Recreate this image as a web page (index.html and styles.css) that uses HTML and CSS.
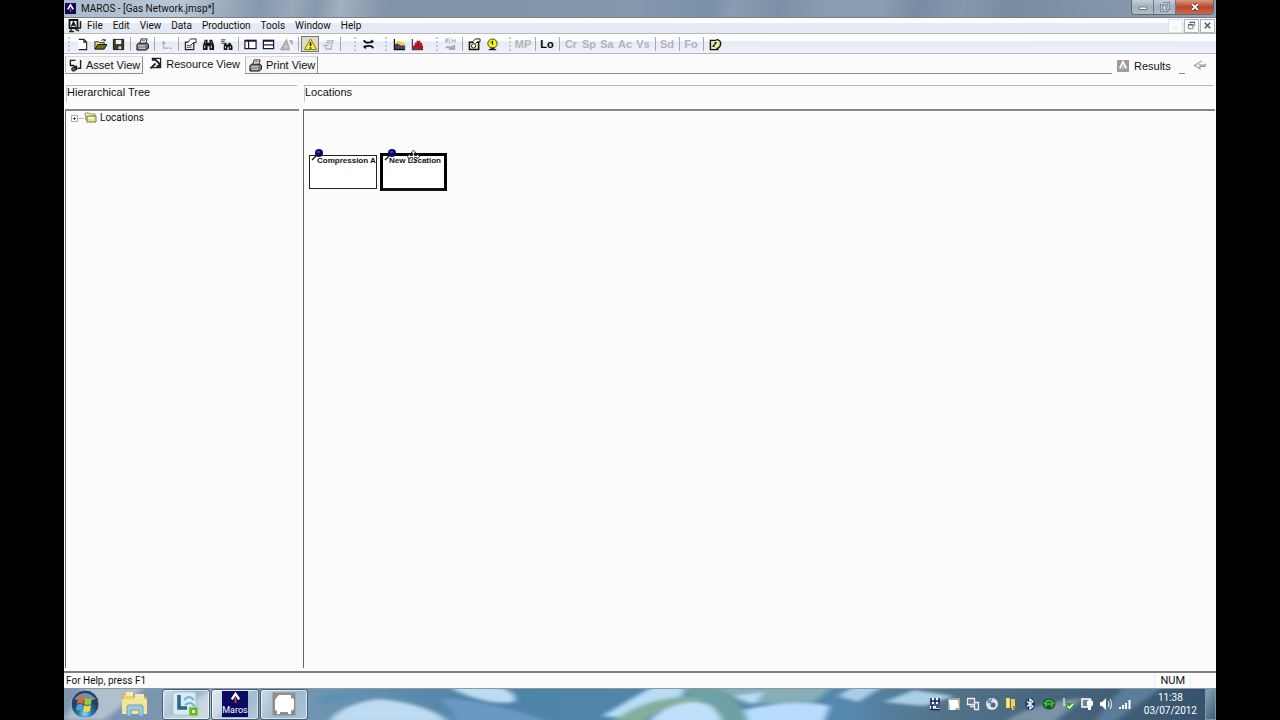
FILE: index.html
```html
<!DOCTYPE html>
<html lang="en">
<head>
<meta charset="utf-8">
<title>MAROS - [Gas Network.jmsp*]</title>
<link rel="stylesheet" href="styles.css">
</head>
<body>
<div class="desktop">
  <header class="titlebar">
    <svg class="app-icon" viewBox="0 0 12 12"><rect width="12" height="12" fill="#0b0b5c"/><path d="M3 7 6 2l3 5" fill="none" stroke="#fff" stroke-width="1.8"/><path d="M6 6v4" stroke="#c33" stroke-width="1.6"/></svg>
    <h1 class="title">MAROS - [Gas Network.jmsp*]</h1>
    <div class="window-controls">
      <button class="wc" aria-label="Minimize"><svg viewBox="0 0 12 12"><rect x="1.500" y="6" width="9" height="3" fill="#fff" stroke="#667" /></svg></button>
      <button class="wc" aria-label="Restore"><svg viewBox="0 0 12 12"><path d="M4 1.500h6.500v6.500H9M1.500 3.500h7v7h-7z" fill="none" stroke="#4e5a68" stroke-width="2.400"/><path d="M4 1.500h6.500v6.500H9M1.500 3.500h7v7h-7zM4.500 6.500h1v1h-1z" fill="none" stroke="#fff"/></svg></button>
      <button class="wc wc-close" aria-label="Close"><svg viewBox="0 0 12 12"><path d="m2.500 2.500 7 7m0-7-7 7" stroke="#5a3030" stroke-width="4"/><path d="m2.500 2.500 7 7m0-7-7 7" stroke="#fff" stroke-width="2.200"/></svg></button>
    </div>
  </header>

  <nav class="menubar" aria-label="Menu">
    <svg class="doc-icon" viewBox="0 0 14 14"><path d="M1.500 1h8v8h-8z" fill="#fff" stroke="#111" stroke-width="1.800"/><path d="m3.500 7.500 2-4.500 2 4.500M4 6h3" fill="none" stroke="#111" stroke-width="1.500"/><path d="M1 12.500h5M3 9v4M12.500 2v7H9M10 8l-2 2.500 3 1.500" fill="none" stroke="#222" stroke-width="1.500"/></svg>
    <button class="menu">File</button><button class="menu">Edit</button><button class="menu">View</button><button class="menu">Data</button><button class="menu">Production</button><button class="menu">Tools</button><button class="menu">Window</button><button class="menu">Help</button>
    <div class="mdi">
      <button class="mdi-btn mdi-off" aria-label="Minimize document"><svg viewBox="0 0 10 10"><path d="M3 8h4" stroke="#cdd3de"/></svg></button>
      <button class="mdi-btn" aria-label="Restore document"><svg viewBox="0 0 10 10"><path d="M3.500 3V1.500h5v4H7M1.500 4.500h5v4h-5z" fill="none" stroke="#777"/><path d="M1 4h6M3 1.500h6" stroke="#666" stroke-width="1.500"/></svg></button>
      <button class="mdi-btn" aria-label="Close document"><svg viewBox="0 0 10 10"><path d="m2 2 6 6m0-6L2 8" stroke="#555" stroke-width="1.600"/></svg></button>
    </div>
  </nav>

  <div class="toolbar" role="toolbar">
    <div class="group">
      <i class="grip"></i>
      <button class="tool" aria-label="New"><svg viewBox="0 0 14 14"><path d="M2.500 1.500h6l3 3v8h-9" fill="#fff" stroke="none"/><path d="M3 1.500h5.500l3 3v8H3M8.500 1.500v3h3" fill="none" stroke="#222" stroke-width="1.200"/></svg></button>
      <button class="tool" aria-label="Open"><svg viewBox="0 0 14 14"><path d="M1 12V4h4l1 1h5v2" fill="#e8e06a" stroke="#222"/><path d="M1 12l3-5h10l-3 5z" fill="#6b6b18" stroke="#111"/><path d="M8 3c1-2 3-2 4 0V1m0 2h-2" fill="none" stroke="#222"/></svg></button>
      <button class="tool" aria-label="Save"><svg viewBox="0 0 14 14"><path d="M1.500 1.500h11v11h-11z" fill="#3c3c20" stroke="#111"/><path d="M4 2h6v4.500H4z" fill="#eee"/><path d="M7 9h3v3H7z" fill="#ddd"/></svg></button>
      <i class="sep"></i>
      <button class="tool" aria-label="Print"><svg viewBox="0 0 14 14"><path d="M4 6l1.500-5H12l-1.500 5" fill="#fff" stroke="#222"/><path d="M6 3h4" stroke="#555"/><path d="M1 7l2-1.500h9L13.500 7v4L11 13H1z" fill="#777" stroke="#111"/><path d="M2 8.500h8M3 11h7" stroke="#eee"/></svg></button>
      <i class="sep"></i>
      <button class="tool" aria-label="Up one level" disabled><svg viewBox="0 0 14 14"><path d="M4 3 1.500 6h5z" fill="#aaa"/><path d="M4 4v7h5M10 11h3" fill="none" stroke="#aaa" stroke-width="1.300"/></svg></button>
      <i class="sep"></i>
      <button class="tool" aria-label="Properties"><svg viewBox="0 0 14 14"><path d="M1.500 4.500h9v8h-9z" fill="#eee" stroke="#222" stroke-width="1.300"/><path d="M3 8h5M3 10h5" stroke="#444"/><path d="M4 5l3-4h6v4h-3L7 8" fill="#fff" stroke="#222"/></svg></button>
      <button class="tool" aria-label="Find"><svg viewBox="0 0 14 14"><path d="M3 2h3v3h2V2h3l2 6v5H8V9H6v4H1V8z" fill="#161616"/><path d="M3 8v3M10 8v3M4 4v1M10 4v1" stroke="#fff"/></svg></button>
      <button class="tool" aria-label="Find next"><svg viewBox="0 0 14 14"><path d="M1 2h5M1 4h4M2 6h3" stroke="#333"/><path d="M5 5h2v2h2V5h2l2.500 4v4H9.500v-3H8v3H4V9z" fill="#161616"/><path d="M6 9v2M11 9v2" stroke="#fff"/></svg></button>
      <i class="sep"></i>
      <button class="tool" aria-label="Split vertically"><svg viewBox="0 0 14 14"><path d="M1 2.500h12v9H1zM5 3v8" fill="#fff" stroke="#18183c" stroke-width="1.300"/><path d="M1 3h12" stroke="#18183c" stroke-width="2"/></svg></button>
      <button class="tool" aria-label="Split horizontally"><svg viewBox="0 0 14 14"><path d="M1.500 2.500h11v9h-11zM2 7.500h10" fill="#fff" stroke="#18183c" stroke-width="1.300"/><path d="M1 3h12" stroke="#18183c" stroke-width="2"/></svg></button>
      <button class="tool" aria-label="Font" disabled><svg viewBox="0 0 14 14"><path d="M1 12.500 7 2l3 10.500zM10 3h3v4" fill="#bbb" stroke="#a5a5a5" stroke-width="1.300"/><path d="M5 9h3" stroke="#eee"/></svg></button>
      <i class="sep"></i>
      <button class="tool pressed" aria-label="Warnings" aria-pressed="true"><svg viewBox="0 0 14 14"><path d="M7 1 13.500 12.500H.5z" fill="#f7f02a" stroke="#77711c"/><path d="M7 4.500v4M7 10v1.500" stroke="#111" stroke-width="1.700"/></svg></button>
      <button class="tool" aria-label="Export" disabled><svg viewBox="0 0 14 14"><path d="M5 3h7l-2 4v5H4V8M1 8h6M4 5h5" fill="none" stroke="#aaa" stroke-width="1.200"/></svg></button>
      <i class="sep"></i>
    </div>
    <div class="group g-swap">
      <i class="grip"></i>
      <button class="tool" aria-label="Refresh"><svg viewBox="0 0 14 14"><path d="M2 2.500q1 3 5 2.500l5-1M2 9.500l5-1q4-.5 5 2.500" fill="none" stroke="#111" stroke-width="2" transform="matrix(1 0 0 1 0 0)"/><path d="m9.500 1.500 3.500 2-3 2.500zM4.500 7.500 1 9.500 4 12z" fill="#111"/></svg></button>
    </div>
    <div class="group g-chart">
      <i class="grip"></i>
      <button class="tool" aria-label="Area chart"><svg viewBox="0 0 14 14"><path d="M2 12V6l3-3 4 1 4 2v6z" fill="#dfd83c"/><path d="M2 12V7l3-1 3 2 5 0v4z" fill="#39397c"/><path d="M3 10h9" stroke="#a33"/><path d="M1.500 1v11.500H13" fill="none" stroke="#111" stroke-width="1.300"/></svg></button>
      <button class="tool" aria-label="Histogram"><svg viewBox="0 0 14 14"><path d="M2 12V8h2V5h2V3h4v2h2v3h1v4z" fill="#b01626"/><path d="M1.500 1v11.500H13" fill="none" stroke="#444" stroke-width="1.300"/></svg></button>
    </div>
    <div class="group g-run">
      <i class="grip"></i>
      <button class="tool" aria-label="Resume" disabled><svg viewBox="0 0 14 14"><path d="M2 5V1h2v2H2l2 2M9 5V1M9 3h3M12 1v4M5 1h2M5 3h2M5 5h2" fill="none" stroke="#aaa"/><path d="M2 9h6l4-2v6H6l-1-2H2z" fill="#aaa"/></svg></button>
      <i class="sep"></i>
      <button class="tool" aria-label="Run settings"><svg viewBox="0 0 14 14"><path d="M1.500 4.500h10v8h-10z" fill="#f1e98b" stroke="#111" stroke-width="1.600"/><circle cx="6" cy="8.500" r="2.300" fill="#fff" stroke="#222"/><path d="M5 4l3-3h5v3h-3L8 6" fill="#fff" stroke="#111"/></svg></button>
      <button class="tool" aria-label="Run"><svg viewBox="0 0 14 14"><circle cx="7" cy="6" r="5" fill="#f5ef1e" stroke="#3c3a10"/><path d="M7 3v4M5.500 4v1" stroke="#222" stroke-width="1.200"/><path d="M3 12.500h8M5 11h4" stroke="#222" stroke-width="1.500"/></svg></button>
    </div>
    <div class="group g-text">
      <i class="grip"></i>
      <button class="tool" disabled>MP</button><i class="sep"></i>
      <button class="tool tool-on">Lo</button><i class="sep"></i>
      <button class="tool" disabled>Cr</button><button class="tool" disabled>Sp</button><button class="tool" disabled>Sa</button><button class="tool" disabled>Ac</button><button class="tool" disabled>Vs</button><i class="sep"></i>
      <button class="tool" disabled>Sd</button><i class="sep"></i>
      <button class="tool" disabled>Fo</button><i class="sep"></i>
      <button class="tool" aria-label="Edit notes"><svg viewBox="0 0 14 14"><path d="M1.500 2.500h8v10h-8z" fill="#e4eaa0" stroke="#111" stroke-width="1.500"/><path d="M8 1.500q5 1 4.500 5-.5 4-4.500 5" fill="#e4eaa0" stroke="#111" stroke-width="1.500"/><path d="m4 9 4-4M4 9l2 0M8 5H6" fill="none" stroke="#111" stroke-width="1.300"/></svg></button>
    </div>
  </div>

  <div class="tabrow">
    <div class="tabs" role="tablist">
      <button class="tab" role="tab"><svg viewBox="0 0 14 14"><path d="M1.500 7V1.500H7M12.500 1v9H9" fill="none" stroke="#222" stroke-width="1.500"/><path d="M1 7h4l3 3M8 7v4H5" stroke="#111" stroke-width="1.500" fill="none"/><circle cx="5" cy="11" r="2.200" fill="#555" stroke="#222"/></svg>Asset View</button>
      <button class="tab active" role="tab" aria-selected="true"><svg viewBox="0 0 14 14"><path d="M3 1.500h9.500v10H1" fill="#fff" stroke="#222" stroke-width="1.300"/><path d="M3 3h4l4 4v3H8M2 12l5-5" fill="none" stroke="#223" stroke-width="2"/></svg>Resource View</button>
      <button class="tab" role="tab"><svg viewBox="0 0 14 14"><path d="M4 6l1.500-5H12l-1.500 5" fill="#fff" stroke="#222"/><path d="M6 3h4" stroke="#555"/><path d="M1 7l2-1.500h9L13.500 7v4L11 13H1z" fill="#777" stroke="#111"/><path d="M2 8.500h8M3 11h7" stroke="#eee"/></svg>Print View</button>
    </div>
    <div class="tab-line"></div>
    <div class="results">
      <button class="result-btn"><svg viewBox="0 0 13 13"><rect width="13" height="13" fill="#9c9c9c"/><path d="m3 9 3.500-7L10 9" fill="none" stroke="#fff" stroke-width="2"/><path d="M6.500 7v3" stroke="#ddd" stroke-width="1.500"/></svg>Results</button>
      <i class="dash"></i>
      <button class="back" aria-label="Back"><svg viewBox="0 0 14 14"><path d="M9 2 1 7l6 3.500V8h6M5 6.500h8V5" fill="none" stroke="#999" stroke-width="1.200"/></svg></button>
    </div>
  </div>

  <main class="workspace">
    <section class="side">
      <h2 class="pane-head">Hierarchical Tree</h2>
      <div class="pane tree">
        <button class="expand" aria-label="Expand"><svg viewBox="0 0 7 7"><path d="M.5.5h6v6h-6z" fill="#fff" stroke="#aaa"/><path d="M2 3.500h3M3.500 2v3" stroke="#555"/></svg></button>
        <i class="branch"></i>
        <svg class="folder" viewBox="0 0 13 11"><path d="M1 1h4l1 1h5v6H2z" fill="#f8f6c0" stroke="#98966a"/><path d="M3 4h9v6H3z" fill="#ebe78c" stroke="#77743c"/><path d="M4 6h6" stroke="#fff"/></svg>
        <span>Locations</span>
      </div>
    </section>
    <section class="view">
      <h2 class="pane-head">Locations</h2>
      <div class="pane canvas">
        <div class="node node-a"><svg class="pin" viewBox="0 0 12 12"><path d="m1 11 4-4" stroke="#111" stroke-width="1.200"/><circle cx="8" cy="4" r="4" fill="#08086e"/><path d="M6 3h3" stroke="#7777c8"/></svg><span class="node-label">Compression A</span></div>
        <div class="node node-b selected"><svg class="pin" viewBox="0 0 12 12"><path d="m1 11 4-4" stroke="#111" stroke-width="1.200"/><circle cx="8" cy="4" r="4" fill="#08086e"/><path d="M6 3h3" stroke="#7777c8"/></svg><span class="node-label">New Location</span></div>
        <svg class="cursor" viewBox="0 0 13 13"><path d="M6.500 0 9 3H7.300v2.500H10V4l3 2.500L10 9V7.500H7.300V10H9l-2.500 3L4 10h1.700V7.500H3V9L0 6.500 3 4v1.500h2.700V3H4z" fill="#fff" stroke="#222" stroke-width=".8"/></svg>
      </div>
    </section>
  </main>

  <footer class="status"><span>For Help, press F1</span><span class="num">NUM</span></footer>

  <div class="taskbar">
    <svg class="backdrop" viewBox="0 0 1152 32" preserveAspectRatio="none">
      <defs><filter id="soft" x="-5%" y="-30%" width="110%" height="160%"><feGaussianBlur stdDeviation="3 1.500"/></filter>
      <linearGradient id="sky"><stop offset="0" stop-color="#7f94ad"/><stop offset=".2" stop-color="#7397b4"/><stop offset=".36" stop-color="#4e83a8"/><stop offset=".68" stop-color="#5588ae"/><stop offset=".76" stop-color="#547389"/><stop offset="1" stop-color="#35526c"/></linearGradient></defs>
      <rect width="1152" height="32" fill="url(#sky)"/>
      <g filter="url(#soft)">
        <path d="M20 0h60L40 32H0zM100 32 150 0h40l-40 32z" fill="#b2c0ce"/>
        <path d="M265 34q10-18 55-24 44 6 64 24z" fill="#bddaf0"/>
        <path d="M250 10q60-18 130 16l40 8h-30q-60-34-130-18z" fill="#5e91b0"/>
        <path d="M385-2h45q26 6 20 16-25 4-60-12z" fill="#bcdcf0"/>
        <path d="M376 10q50 2 110 24h-90z" fill="#6a98c4"/>
        <path d="M538 28 590-2h32l-4 10-60 22z" fill="#b8dcf4"/>
        <path d="M548 34q30-24 80-26l26 4q-50 2-76 22z" fill="#84ae9c"/>
        <path d="M584 34q20-20 50-20 20 2 24 20z" fill="#bfe0fb"/>
        <path d="M620-2h30q30 18 34 36h-26q-6-20-40-30z" fill="#6ea1a5"/>
        <path d="M650-2h120l-20 16-70 2z" fill="#87adb6"/>
        <path d="M680 22q50-12 86-4l-6 16h-76zM670 8l30-4-10 12z" fill="#b8dcfb"/>
        <path d="M774 8 790-2h30l-26 16zM820 14l30-12 40 6-30 10z" fill="#a9cde5"/>
        <path d="M940 34q30-20 80-24l-30 24z" fill="#7b93a6"/>
        <path d="M1060-2h40l-50 36h-20z" fill="#5c7d9b"/>
      </g>
      <path d="M0 .5h1152" stroke="#879aa6"/>
    </svg>
    <button class="start" aria-label="Start"><svg viewBox="0 0 30 30"><defs><radialGradient id="orb" cy=".85"><stop offset="0" stop-color="#7fe0f8"/><stop offset=".5" stop-color="#2374a4"/><stop offset="1" stop-color="#234264"/></radialGradient></defs><circle cx="15" cy="15" r="14" fill="url(#orb)" stroke="#9fb8ca"/><path d="M4 10Q15-2 26 10 15 13 4 10z" fill="#fff" opacity=".4"/><path d="M8 9q3-2 6 0l-1 6q-3-2-6 0z" fill="#e9632c"/><path d="M15 9q3 2 7 0l-1 6q-3 2-7 0z" fill="#94c83d"/><path d="M7 16q3-2 6 0l-1 6q-3-2-6 0z" fill="#4ba4dc"/><path d="M14 16q3 2 7 0l-1 6q-4 2-7 0z" fill="#fbd34a"/></svg></button>
    <button class="task plain" aria-label="Explorer"><svg viewBox="0 0 28 26"><path d="M2 3h9l2 3h12v16H2z" fill="#e8d175" stroke="#c9ab4a"/><path d="M5 1h7v4H5zM14 3h9v5h-9z" fill="#f5eaa6"/><path d="M1 8h25v15H1z" fill="#f3e69a"/><path d="M6 25v-9q0-2 2-2h12q2 0 2 2v9h-4v-6h-8v6z" fill="#9cc8e2" stroke="#6f9cb8"/></svg></button>
    <button class="task" aria-label="Lync"><svg viewBox="0 0 28 26"><rect x="1" y="1" width="23" height="23" rx="3" fill="#dcebf3" stroke="#a7c5d4"/><path d="M7 4v13h8" fill="none" stroke="#2b6687" stroke-width="3.500"/><path d="M12 9q5-6 10 0M13 14q6-5 10 2" fill="none" stroke="#6fb4d6" stroke-width="2"/><rect x="17" y="16" width="9" height="9" fill="#62b82d" stroke="#b9dca0"/><path d="M20 19h3v3h-3z" fill="#dff3cd"/></svg></button>
    <button class="task maros"><span class="maros-tile"><svg viewBox="0 0 14 13"><path d="m3 8 4-6 4 6" fill="none" stroke="#fff" stroke-width="2.500"/><path d="M7 6v6" stroke="#c8423a" stroke-width="2"/></svg>Maros</span></button>
    <button class="task" aria-label="Capture"><svg viewBox="0 0 28 26"><rect x="2" y="1" width="24" height="24" fill="#8b8f92" stroke="#b8bec2"/><path d="M7 6l2-2h12v3l3 1v10l-3 2v3h-3v-2h-8v2H7v-3l-2-1V9z" fill="#fff"/></svg></button>
    <div class="tray">
      <svg viewBox="0 0 14 14"><path d="M2 1h10v12H2z" fill="#fff"/><path d="M3 1v6M7 1v6M11 1v6M2 4h10M2 8h10M4 8v5M8 10h4M2 12.500h10" stroke="#10205c" stroke-width="1.600"/></svg>
      <svg viewBox="0 0 14 14"><path d="M1 1h12v12H1z" fill="#9aa8b0"/><path d="M2 3h9l1 8H9l-1 2H3z" fill="#fff"/></svg>
      <svg viewBox="0 0 14 14"><path d="M1.500 1.500h7v6h-7zM4 9.500h4M8.500 5.500h4v7h-4z" fill="#667b8c" stroke="#eee" stroke-width="1.300"/></svg>
      <svg viewBox="0 0 14 14"><circle cx="7" cy="7" r="6" fill="#dce6ec"/><circle cx="8" cy="8" r="2.500" fill="#496b82"/><path d="M7 7 2 2M3 6l4-4" stroke="#5c7c94" stroke-width="1.500"/></svg>
      <svg viewBox="0 0 14 14"><path d="M2 1h4v10H2zM7 2h4v9H7z" fill="#f3d24f"/><path d="M4 2v8M9 8v5" stroke="#fff3ae" stroke-width="1.500"/><path d="M8 9h4l-2 4z" fill="#c77b20"/></svg>
      <svg viewBox="0 0 14 14"><ellipse cx="7" cy="7" rx="5" ry="6.500" fill="#164574"/><path d="m4 4.500 6 5L7 12V2l3 2.500-6 5" fill="none" stroke="#fff" stroke-width="1.200"/></svg>
      <svg viewBox="0 0 14 14"><ellipse cx="7" cy="7" rx="6.500" ry="5.500" fill="#175a25"/><path d="M2 7q5-7 10 0M4 10V7h6v3" fill="none" stroke="#4bc448" stroke-width="1.500"/></svg>
      <svg viewBox="0 0 14 14"><path d="M3 1v7h4" stroke="#b5c8cf" stroke-width="2" fill="none"/><path d="M5 6h8v4l-4 4-4-3z" fill="#37983c"/><path d="m6.500 9 2 2 3.500-4" stroke="#fff" stroke-width="1.500" fill="none"/></svg>
      <svg viewBox="0 0 14 14"><path d="M2 2h8v8H2z" fill="#6d8292" stroke="#fff" stroke-width="1.500"/><path d="M7 4h6v4l-2 2v3H8v-3L7 8z" fill="#fff"/><path d="M9 4V2M11 4V2" stroke="#fff"/></svg>
      <svg viewBox="0 0 14 14"><path d="M1 5h2l4-4v12L3 9H1z" fill="#fff"/><path d="M9 4q2 3 0 6M11 2q3 5 0 10" fill="none" stroke="#d3e0e8" stroke-width="1.200"/></svg>
      <svg viewBox="0 0 14 14"><path d="M2 10v2M5 8v4M8 6v6M11.500 3v9" stroke="#fff" stroke-width="2"/></svg>
    </div>
    <div class="clock"><time>11:38</time><time>03/07/2012</time></div>
    <button class="show-desktop" aria-label="Show desktop"></button>
  </div>
</div>
</body>
</html>
```
FILE: styles.css
```css
* { box-sizing: border-box; }
body { margin: 0; padding: 0 5%; background: #000; color: #111; font: 10px/14px Roboto, "Noto Sans", sans-serif; }
button { margin: 0; padding: 0; border: 0; background: none; color: inherit; font: inherit; }
h1, h2 { margin: 0; font: inherit; }
svg { display: block; flex: none; }
.desktop { display: flex; flex-direction: column; min-height: 100vh; background: #fdfcfd; }

.titlebar { display: flex; align-items: center; height: 18px; padding-left: 1px; border-bottom: 1px solid #75828f; background: linear-gradient(100deg, #a9bacb 0%, #bac8d7 10%, #a3b2c4 13%, #8599ae 17%, #97a8ba 20%, #8598ad 22%, #a3b1c0 24%, #8093a9 28%, #8498ae 50%, #7890a8 56%, #899db2 58%, #7b90a6 62%, #899db2 66%, #8a9db1 71%, #778ca3 74%, #8599ae 78%, #778ba1 82%, #8fa1b4 100%); }
.app-icon { width: 11px; height: 11px; }
.title { margin-left: 5px; }
.window-controls { display: flex; align-self: flex-start; margin-left: auto; margin-right: 2px; border: 1px solid #5c6978; border-top: 0; border-radius: 0 0 4px 4px; overflow: hidden; }
.wc { display: flex; align-items: center; justify-content: center; width: 22px; height: 14px; border-right: 1px solid #6b7887; background: linear-gradient(#c4ced8, #a3b0bd 50%, #b2bec9); }
.wc svg { width: 10px; height: 10px; }
.wc-close { width: 37px; border-right: 0; background: linear-gradient(#d99a86, #b9492b 50%, #c9694a); }

.menubar { display: flex; align-items: center; gap: 10px; height: 16px; padding-left: 4px; border-bottom: 1px solid #b9bcc6; background: linear-gradient(#fdfdfe 30%, #e6ebf5 36%, #e3e8f3); }
.doc-icon { width: 14px; height: 14px; margin-right: -5px; }
.mdi { display: flex; gap: 1px; margin-left: auto; padding-right: 1px; }
.mdi-btn { display: grid; place-items: center; width: 15px; height: 14px; border: 1px solid #aeb6c2; background: #fafbfd; }
.mdi-btn svg { width: 9px; height: 9px; }
.mdi-off { border-color: #dde2ea; }

.toolbar { display: flex; align-items: center; height: 20px; padding: 1px 0 0 2px; border-bottom: 1px solid #b0b4be; background: linear-gradient(#fdfdfe 35%, #e5ebf6 42%, #eff2fa); }
.group { display: flex; align-items: center; }
.g-swap { margin-left: 9px; }
.g-chart { margin-left: 6px; }
.g-run { margin-left: 8px; }
.g-text { margin-left: 6px; }
.grip { width: 2px; height: 14px; margin: 0 3px 0 2px; border-left: 2px dotted #c3c9d2; }
.sep { width: 1px; height: 14px; margin: 0 2px 0 3px; background: #a3a9b3; }
.tool { display: flex; align-items: center; justify-content: center; width: 18px; height: 16px; font: bold 11px/14px "Liberation Sans", Arial, sans-serif; }
.tool:disabled { color: #b1b4b9; }
.tool svg { width: 13px; height: 13px; }
.tool-on { color: #000; }
.pressed { border: 1px solid #777; background: #dcd9c4; }

.tabrow { display: flex; height: 20px; font: 11px/14px "Liberation Sans", Arial, sans-serif; }
.tabs { display: flex; align-items: flex-end; padding-left: 1px; }
.tab { display: flex; align-items: center; gap: 4px; height: 18px; padding: 0 2px 0 3px; border: 1px solid #8c8c8c; border-top-color: #ddd; border-left-color: #bbb; background: #f7f6f7; white-space: nowrap; }
.tab svg { width: 13px; height: 13px; }
.tab.active { height: 20px; padding: 0 5px 1px 6px; border: 0; background: none; }
.tab-line { flex: 1; border-bottom: 1px solid #8c8c8c; }
.results { display: flex; align-items: center; width: 104px; padding: 3px 2px 0 5px; }
.result-btn { display: flex; align-items: center; gap: 5px; }
.result-btn svg { width: 12px; height: 12px; }
.dash { align-self: flex-end; width: 6px; height: 1px; margin-left: 8px; background: #888; }
.back { margin-left: 8px; }
.back svg { width: 14px; height: 13px; }

.workspace { display: flex; flex: 1; gap: 4px; padding: 11px 1px 3px 1px; }
.side { display: flex; flex-direction: column; width: 234px; }
.view { display: flex; flex: 1; flex-direction: column; min-width: 0; }
.pane-head { height: 17px; margin: 0 2px 7px 1px; border-top: 1px solid #b5b5b5; border-left: 1px solid #c9c9c9; font: 11px/13px "Liberation Sans", Arial, sans-serif; }
.pane { flex: 1; border-top: 2px solid #858585; border-left: 1px solid #666; }
.tree { display: flex; align-items: flex-start; padding: 0 0 0 5px; }
.expand { padding-top: 4px; }
.expand svg { width: 7px; height: 7px; }
.branch { width: 6px; height: 1px; margin-top: 7px; background: #bbb; }
.folder { width: 13px; height: 11px; margin: 1px 3px 0 0; }
.canvas { position: relative; }

.node { position: absolute; top: 44px; width: 68px; height: 34px; border: 1px solid #222; background: #fff; font: bold 8px/10px "Liberation Sans", Arial, sans-serif; }
.node-a { left: 5px; }
.node-b { left: 76px; }
.node.selected { top: 42px; width: 67px; height: 38px; border: 3px solid #000; border-bottom-color: #111; }
.node-label { display: block; padding-left: 7px; overflow: hidden; white-space: nowrap; }
.selected .node-label { padding-left: 6px; }
.pin { position: absolute; left: 1px; top: -7px; width: 12px; height: 12px; }
.selected .pin { top: -7px; }
.cursor { position: absolute; left: 103px; top: 39px; width: 13px; height: 13px; }

.status { display: flex; justify-content: space-between; align-items: center; height: 17px; padding: 1px 25px 0 2px; border-top: 2px solid #808080; background: #fdfcfd; }
.num { padding: 0 5px; border: solid #eee; border-width: 0 1px; font-size: 11px; }

.taskbar { position: relative; display: flex; align-items: center; height: 32px; overflow: hidden; }
.taskbar > * { position: relative; }
.taskbar > .backdrop { position: absolute; inset: 0; width: 100%; height: 100%; }
.start { width: 44px; padding-left: 6px; }
.start svg { width: 30px; height: 30px; }
.task { display: flex; align-items: center; justify-content: center; width: 48px; height: 31px; margin-right: 1px; border: 1px solid #42617a; border-radius: 3px; background: linear-gradient(120deg, #ffffffaa, #c8e0ee66 50%, #ffffff77); box-shadow: inset 0 0 0 1px #ffffff99; }
.task svg { width: 28px; height: 26px; }
.plain { width: 54px; margin-right: 0; border: 0; background: none; box-shadow: none; }
.maros-tile { display: flex; flex-direction: column; align-items: center; width: 26px; height: 26px; background: #0a0a62; color: #fff; font-size: 9px; line-height: 11px; }
.maros-tile svg { width: 13px; height: 14px; }
.tray { display: flex; gap: 5px; margin-left: auto; }
.tray svg { width: 14px; height: 14px; }
.clock { display: flex; flex-direction: column; align-items: center; margin: 0 8px 0 12px; color: #fff; font-size: 10px; line-height: 13px; }
.show-desktop { width: 11px; height: 31px; border: 1px solid #7d96aa; background: linear-gradient(120deg, #86a3b8, #3c5b75); }
```
